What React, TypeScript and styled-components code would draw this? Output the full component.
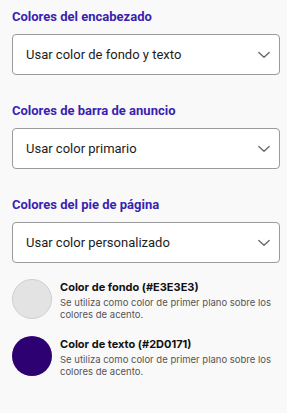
import React from "react";
import styled, { createGlobalStyle } from "styled-components";

const GlobalStyle = createGlobalStyle`
  html, body {
    margin: 0;
    padding: 0;
    background: #f9f9f9;
  }
  body {
    font-family: Inter, "Noto Sans", sans-serif;
  }
`;

const Page = styled.div`
  width: 287px;
  min-height: 413px;
  box-sizing: border-box;
  padding: 7px 7px 0 12px;
  display: flex;
  flex-direction: column;
  gap: 26px;
`;

const Section = styled.section`
  display: flex;
  flex-direction: column;
  gap: 7px;
`;

const Heading = styled.h2`
  margin: 0;
  font-family: Roboto, sans-serif;
  font-size: 13px;
  line-height: 20px;
  font-weight: 700;
  color: #3a1fb0;
`;

const SelectBox = styled.div`
  height: 41px;
  box-sizing: border-box;
  border: 1px solid #9a9a9a;
  border-radius: 4px;
  background: #ffffff;
  display: flex;
  align-items: center;
  justify-content: space-between;
  padding: 0 8px 0 13px;
`;

const SelectText = styled.span`
  font-family: Roboto, sans-serif;
  font-size: 13px;
  color: #1c1c1c;
`;

const Chevron = () => (
  <svg width="14" height="14" viewBox="0 0 14 14" fill="none">
    <path d="M1.8 4.5 L7 9.3 L12.2 4.5" stroke="#666" strokeWidth="1.3" strokeLinecap="round" strokeLinejoin="round" />
  </svg>
);

const SwatchList = styled.div`
  display: flex;
  flex-direction: column;
  gap: 15px;
  margin-top: -10px;
`;

const SwatchRow = styled.div`
  display: flex;
  align-items: flex-start;
  gap: 8px;
`;

const Circle = styled.div<{ $color: string; $bordered?: boolean }>`
  flex: none;
  width: 40px;
  height: 40px;
  border-radius: 50%;
  box-sizing: border-box;
  background: ${(p) => p.$color};
  border: ${(p) => (p.$bordered ? "1px solid #cfcfcf" : "none")};
`;

const SwatchText = styled.div`
  display: flex;
  flex-direction: column;
  padding-top: 1px;
`;

const SwatchTitle = styled.div`
  font-family: Inter, sans-serif;
  font-size: 11px;
  line-height: 14px;
  font-weight: 700;
  color: #111;
  margin-bottom: 3px;
`;

const SwatchDesc = styled.div`
  font-family: Inter, sans-serif;
  font-size: 9.5px;
  line-height: 12px;
  color: #555;
`;

const sections = [
  { title: "Colores del encabezado", value: "Usar color de fondo y texto" },
  { title: "Colores de barra de anuncio", value: "Usar color primario" },
  { title: "Colores del pie de página", value: "Usar color personalizado" },
];

const swatches = [
  { title: "Color de fondo (#E3E3E3)", color: "#e3e3e3", bordered: true },
  { title: "Color de texto (#2D0171)", color: "#2d0171", bordered: false },
];

export default function App() {
  return (
    <>
      <GlobalStyle />
      <Page>
        {sections.map((s) => (
          <Section key={s.title}>
            <Heading>{s.title}</Heading>
            <SelectBox>
              <SelectText>{s.value}</SelectText>
              <Chevron />
            </SelectBox>
          </Section>
        ))}
        <SwatchList>
          {swatches.map((w) => (
            <SwatchRow key={w.title}>
              <Circle $color={w.color} $bordered={w.bordered} />
              <SwatchText>
                <SwatchTitle>{w.title}</SwatchTitle>
                <SwatchDesc>
                  Se utiliza como color de primer plano sobre los colores de acento.
                </SwatchDesc>
              </SwatchText>
            </SwatchRow>
          ))}
        </SwatchList>
      </Page>
    </>
  );
}
